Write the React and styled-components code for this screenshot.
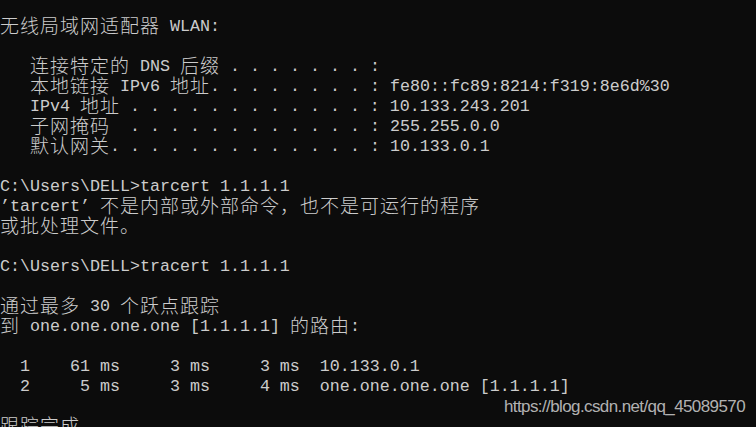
import React from 'react';
import styled, { createGlobalStyle } from 'styled-components';

const GlobalStyle = createGlobalStyle`
  html, body {
    margin: 0;
    padding: 0;
    background: #0c0c0c;
    overflow: hidden;
  }
`;

const lines = [
    '无线局域网适配器 WLAN:',
    '',
    '   连接特定的 DNS 后缀 . . . . . . . :',
    '   本地链接 IPv6 地址. . . . . . . . : fe80::fc89:8214:f319:8e6d%30',
    '   IPv4 地址 . . . . . . . . . . . . : 10.133.243.201',
    '   子网掩码  . . . . . . . . . . . . : 255.255.0.0',
    '   默认网关. . . . . . . . . . . . . : 10.133.0.1',
    '',
    'C:\\Users\\DELL>tarcert 1.1.1.1',
    '’tarcert’ 不是内部或外部命令，也不是可运行的程序',
    '或批处理文件。',
    '',
    'C:\\Users\\DELL>tracert 1.1.1.1',
    '',
    '通过最多 30 个跃点跟踪',
    '到 one.one.one.one [1.1.1.1] 的路由:',
    '',
    '  1    61 ms     3 ms     3 ms  10.133.0.1',
    '  2     5 ms     3 ms     4 ms  one.one.one.one [1.1.1.1]',
    '',
    '跟踪完成。',
];

// runs of full-width chars get their own span (two cells wide)
const WIDE = /([\u2E80-\u9FFF\u3000-\u303F\uFF00-\uFFEF]+)/;

const renderLine = (text) =>
    text.split(WIDE).map((part, i) =>
        i % 2 ? <Wide key={i}>{part}</Wide> : part
    );

const App = () => (
    <>
        <GlobalStyle />
        <Console>
            {lines.map((text, index) => (
                <Line key={index}>{renderLine(text)}</Line>
            ))}
            <Watermark>https://blog.csdn.net/qq_45089570</Watermark>
        </Console>
    </>
);

export default App;

const Console = styled.div`
  position: relative;
  width: 756px;
  height: 427px;
  overflow: hidden;
  box-sizing: border-box;
  padding-top: 17px;
  background: #0c0c0c;
  color: #cccccc;
  font-family: "Liberation Mono", monospace;
  font-size: 16.667px;
`;

const Line = styled.div`
  height: 20px;
  line-height: 20px;
  white-space: pre;
`;

const Wide = styled.span`
  font-family: "Noto Sans CJK SC", sans-serif;
  font-size: 19px;
  font-weight: 300;
  letter-spacing: 1px;
  line-height: 0;
  vertical-align: -1.5px;
`;

const Watermark = styled.div`
  position: absolute;
  right: 11px;
  top: 398px;
  font-family: "Liberation Sans", Arial, sans-serif;
  font-size: 17px;
  line-height: 17px;
  letter-spacing: -0.6px;
  color: rgba(255, 255, 255, 0.7);
  text-shadow: 0 0 1px rgba(0, 0, 0, 0.6);
`;
